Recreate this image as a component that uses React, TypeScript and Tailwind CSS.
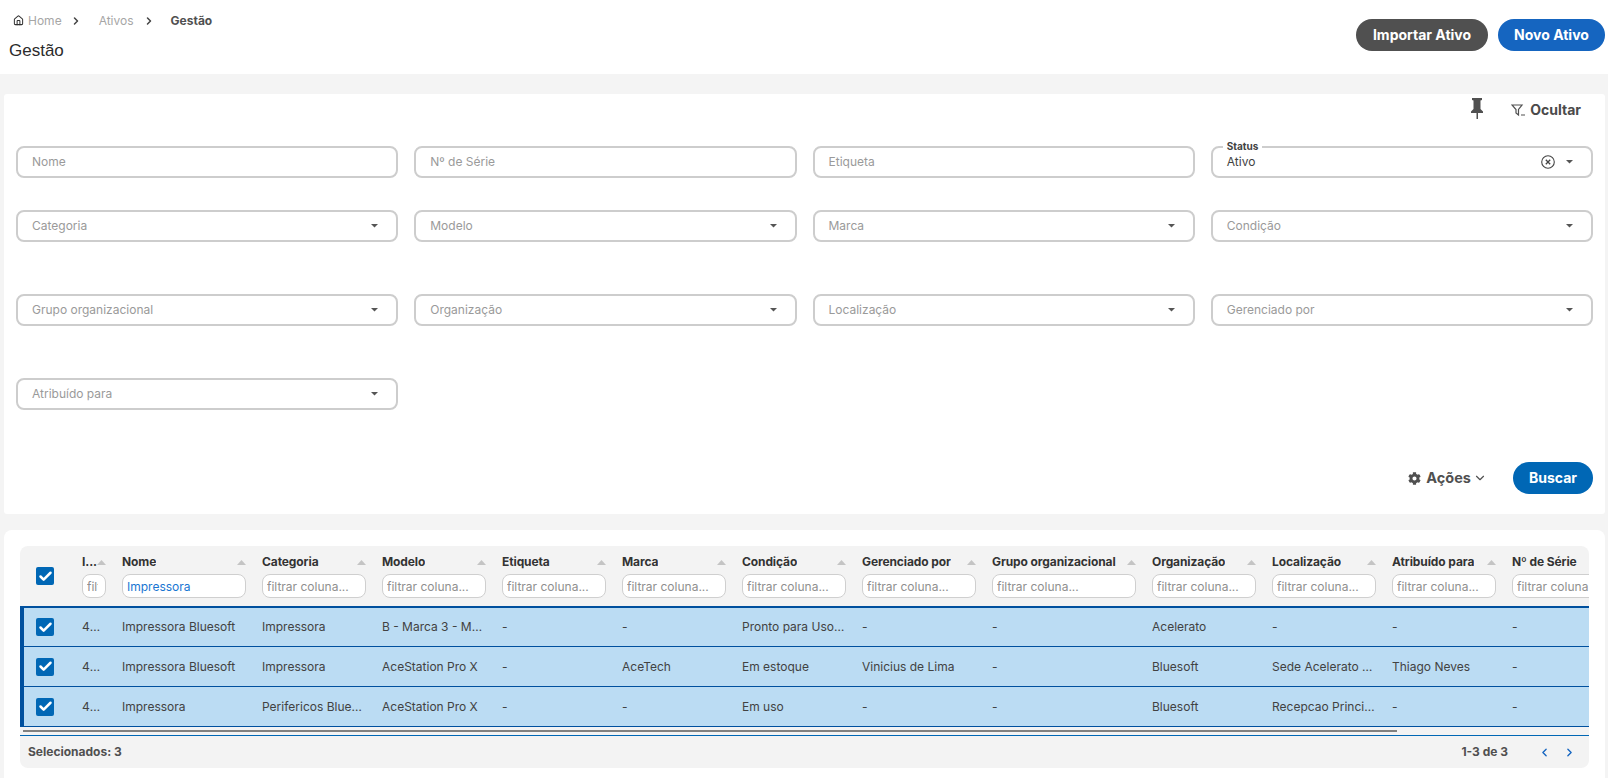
import React from 'react';
import { Home, ChevronRight, ChevronLeft, ChevronDown, Check } from 'lucide-react';
import { FaCog } from 'react-icons/fa';

const columns = [
  { label: 'ID', shown: 'I...', width: 'w-[24px]', filter: '' },
  { label: 'Nome', width: 'w-[124px]', filter: 'Impressora' },
  { label: 'Categoria', width: 'w-[104px]', filter: '' },
  { label: 'Modelo', width: 'w-[104px]', filter: '' },
  { label: 'Etiqueta', width: 'w-[104px]', filter: '' },
  { label: 'Marca', width: 'w-[104px]', filter: '' },
  { label: 'Condição', width: 'w-[104px]', filter: '' },
  { label: 'Gerenciado por', width: 'w-[114px]', filter: '' },
  { label: 'Grupo organizacional', width: 'w-[144px]', filter: '' },
  { label: 'Organização', width: 'w-[104px]', filter: '' },
  { label: 'Localização', width: 'w-[104px]', filter: '' },
  { label: 'Atribuído para', width: 'w-[104px]', filter: '' },
  { label: 'Nº de Série', width: 'w-[104px]', filter: '' },
];

const rows = [
  ['4821', 'Impressora Bluesoft', 'Impressora', 'B - Marca 3 - Modelo 1', '-', '-', 'Pronto para Uso Imediato', '-', '-', 'Acelerato', '-', '-', '-'],
  ['4822', 'Impressora Bluesoft', 'Impressora', 'AceStation Pro X', '-', 'AceTech', 'Em estoque', 'Vinicius de Lima', '-', 'Bluesoft', 'Sede Acelerato Matriz', 'Thiago Neves', '-'],
  ['4823', 'Impressora', 'Perifericos Bluesoft', 'AceStation Pro X', '-', '-', 'Em uso', '-', '-', 'Bluesoft', 'Recepcao Principal', '-', '-'],
];

const Caret = () => (
  <svg width="7" height="4" viewBox="0 0 7 4" className="shrink-0">
    <path d="M0 0h7L3.500 3.500z" fill="#555" />
  </svg>
);

const SortCaret = () => (
  <svg width="9" height="5" viewBox="0 0 9 5" className="shrink-0">
    <path d="M0 5L4.500 0 9 5z" fill="#c4c4c4" />
  </svg>
);

const Box = () => (
  <span className="flex h-[18px] w-[18px] items-center justify-center rounded-[2px] bg-[#0067b5]">
    <Check size={15} strokeWidth={4} color="#fff" />
  </span>
);

const Field = ({ label, select }: { label: string; select?: boolean }) => (
  <div className="flex h-8 items-center justify-between rounded-lg border-2 border-[#cdcdcd] pl-[14px] pr-[18px]">
    <span className="text-xs text-[#9a9a9a]">{label}</span>
    {select && <Caret />}
  </div>
);

export default function App() {
  return (
    <div className="h-[778px] overflow-hidden bg-[#f4f4f4] font-['Inter',sans-serif] text-[#424242]">
      {/* Header */}
      <header className="flex h-[74px] items-start justify-between bg-white pl-[9px] pr-[3px]">
        <div>
          <nav className="mt-[13px] flex h-[15px] items-center text-xs">
            <Home size={11} strokeWidth={2.2} color="#333" className="ml-1" />
            <span className="ml-[4px] text-[#a6a6a6]">Home</span>
            <ChevronRight size={12} strokeWidth={3} color="#444" className="ml-[8px]" />
            <span className="ml-[17px] text-[#a6a6a6]">Ativos</span>
            <ChevronRight size={12} strokeWidth={3} color="#444" className="ml-[9px]" />
            <span className="ml-[16px] font-bold text-[#505050]">Gestão</span>
          </nav>
          <h1 className="mt-[13px] font-['Liberation_Sans',sans-serif] text-[17px] leading-5 text-[#2b2b2b]">Gestão</h1>
        </div>
        <div className="mt-[19px] flex gap-[10px]">
          <button className="h-8 w-[132px] rounded-full bg-[#505050] text-sm font-bold text-white">Importar Ativo</button>
          <button className="h-8 w-[107px] rounded-full bg-[#1565c0] text-sm font-bold text-white">Novo Ativo</button>
        </div>
      </header>

      <main className="pl-1 pr-[3px] pt-5">
        {/* Filtros */}
        <section className="h-[420px] rounded-[3px] bg-white px-3">
          <div className="flex h-[52px] items-start justify-end pr-3 pt-[4px]">
            <svg width="16" height="21" viewBox="0 0 16 21" className="mr-[26px]">
              <path d="M3 0h10v2l-1.500 .5V11L14 13.500V15H9v6H7.500v-6H2v-1.500L4.500 11V2.500L3 2z" fill="#505050" />
            </svg>
            <span className="mt-[2px] flex items-center text-sm font-bold text-[#4a4a4a]">
              <svg width="15" height="13" viewBox="0 0 15 13" className="mr-[4px]">
                <path d="M1 1h10L7.500 5.500V11L5 9V5.500zM10 11h4" fill="none" stroke="#505050" strokeWidth="1.200" />
              </svg>
              Ocultar
            </span>
          </div>

          <div className="grid grid-cols-4 gap-x-4">
            <Field label="Nome" />
            <Field label="Nº de Série" />
            <Field label="Etiqueta" />
            <div className="relative flex h-8 items-center justify-between rounded-lg border-2 border-[#cdcdcd] pl-[14px] pr-[18px]">
              <span className="absolute -top-[8px] left-[10px] bg-white px-1 text-[10px] font-bold leading-3">Status</span>
              <span className="text-xs">Ativo</span>
              <span className="flex items-center gap-[11px]">
                <svg width="14" height="14" viewBox="0 0 14 14">
                  <circle cx="7" cy="7" r="6.300" fill="none" stroke="#444" strokeWidth="1.100" />
                  <path d="M4.800 4.800l4.400 4.400M9.200 4.800l-4.400 4.400" stroke="#444" strokeWidth="1.300" />
                </svg>
                <Caret />
              </span>
            </div>
          </div>
          <div className="mt-8 grid grid-cols-4 gap-x-4">
            <Field label="Categoria" select />
            <Field label="Modelo" select />
            <Field label="Marca" select />
            <Field label="Condição" select />
          </div>
          <div className="mt-[52px] grid grid-cols-4 gap-x-4">
            <Field label="Grupo organizacional" select />
            <Field label="Organização" select />
            <Field label="Localização" select />
            <Field label="Gerenciado por" select />
          </div>
          <div className="mt-[52px] grid grid-cols-4 gap-x-4">
            <Field label="Atribuído para" select />
          </div>

          <div className="mt-[52px] flex items-center justify-end">
            <span className="flex items-center text-[14.500px] font-bold text-[#505050]">
              <FaCog size={13} color="#505050" className="mr-[5px]" />
              Ações
              <ChevronDown size={14} strokeWidth={2} className="ml-[2px]" />
            </span>
            <button className="ml-[26px] h-8 w-20 rounded-full bg-[#0067b5] text-sm font-bold text-white">Buscar</button>
          </div>
        </section>

        {/* Tabela */}
        <section className="mt-4 h-[260px] rounded-t-[8px] bg-white px-4 pt-4">
          <div className="overflow-hidden rounded-lg bg-[#f3f3f3]">
            <div className="flex h-[60px] w-max gap-4">
              <div className="flex w-[46px] shrink-0 items-center pl-4">
                <Box />
              </div>
              {columns.map((col) => (
                <div key={col.label} className={`${col.width} shrink-0 pt-[8px]`}>
                  <div className="flex h-4 items-center justify-between">
                    <span className="truncate text-xs font-bold tracking-[-0.1px] text-[#333]">{col.shown ?? col.label}</span>
                    {col.label !== 'Nº de Série' && <SortCaret />}
                  </div>
                  <input
                    readOnly
                    value={col.filter}
                    placeholder="filtrar coluna..."
                    className="mt-[4px] h-6 w-full rounded-lg border border-[#cfcfcf] bg-white pl-[4px] pr-[7px] text-xs text-[#1976d2] outline-none placeholder:text-[#8f8f8f]"
                  />
                </div>
              ))}
            </div>

            <div className="border-l-4 border-[#00509e]">
              {rows.map((row, i) => (
                <div
                  key={row[0]}
                  className={`flex w-max gap-4 border-b border-[#00509e] bg-[#bbdcf3] ${i === 0 ? 'h-[41px] border-t-2' : 'h-[40px]'}`}
                >
                  <div className="flex w-[42px] shrink-0 items-center pl-3">
                    <Box />
                  </div>
                  {row.map((cell, c) => (
                    <div key={c} className={`${columns[c].width} shrink-0 self-center truncate text-xs`}>
                      {cell}
                    </div>
                  ))}
                </div>
              ))}
            </div>

            <div className="h-[9px] border-b border-[#0067b5] pl-[3px] pt-[3px]">
              <div className="h-[2px] w-[1374px] bg-[#808080]" />
            </div>

            <div className="flex h-8 items-center justify-between pl-2 pr-[13px] text-xs font-bold text-[#505050]">
              <span>Selecionados: 3</span>
              <span className="flex items-center">
                1-3 de 3
                <ChevronLeft size={13} strokeWidth={2.5} color="#1565c0" className="ml-[30px]" />
                <ChevronRight size={13} strokeWidth={2.5} color="#1565c0" className="ml-[12px]" />
              </span>
            </div>
          </div>
        </section>
      </main>
    </div>
  );
}
